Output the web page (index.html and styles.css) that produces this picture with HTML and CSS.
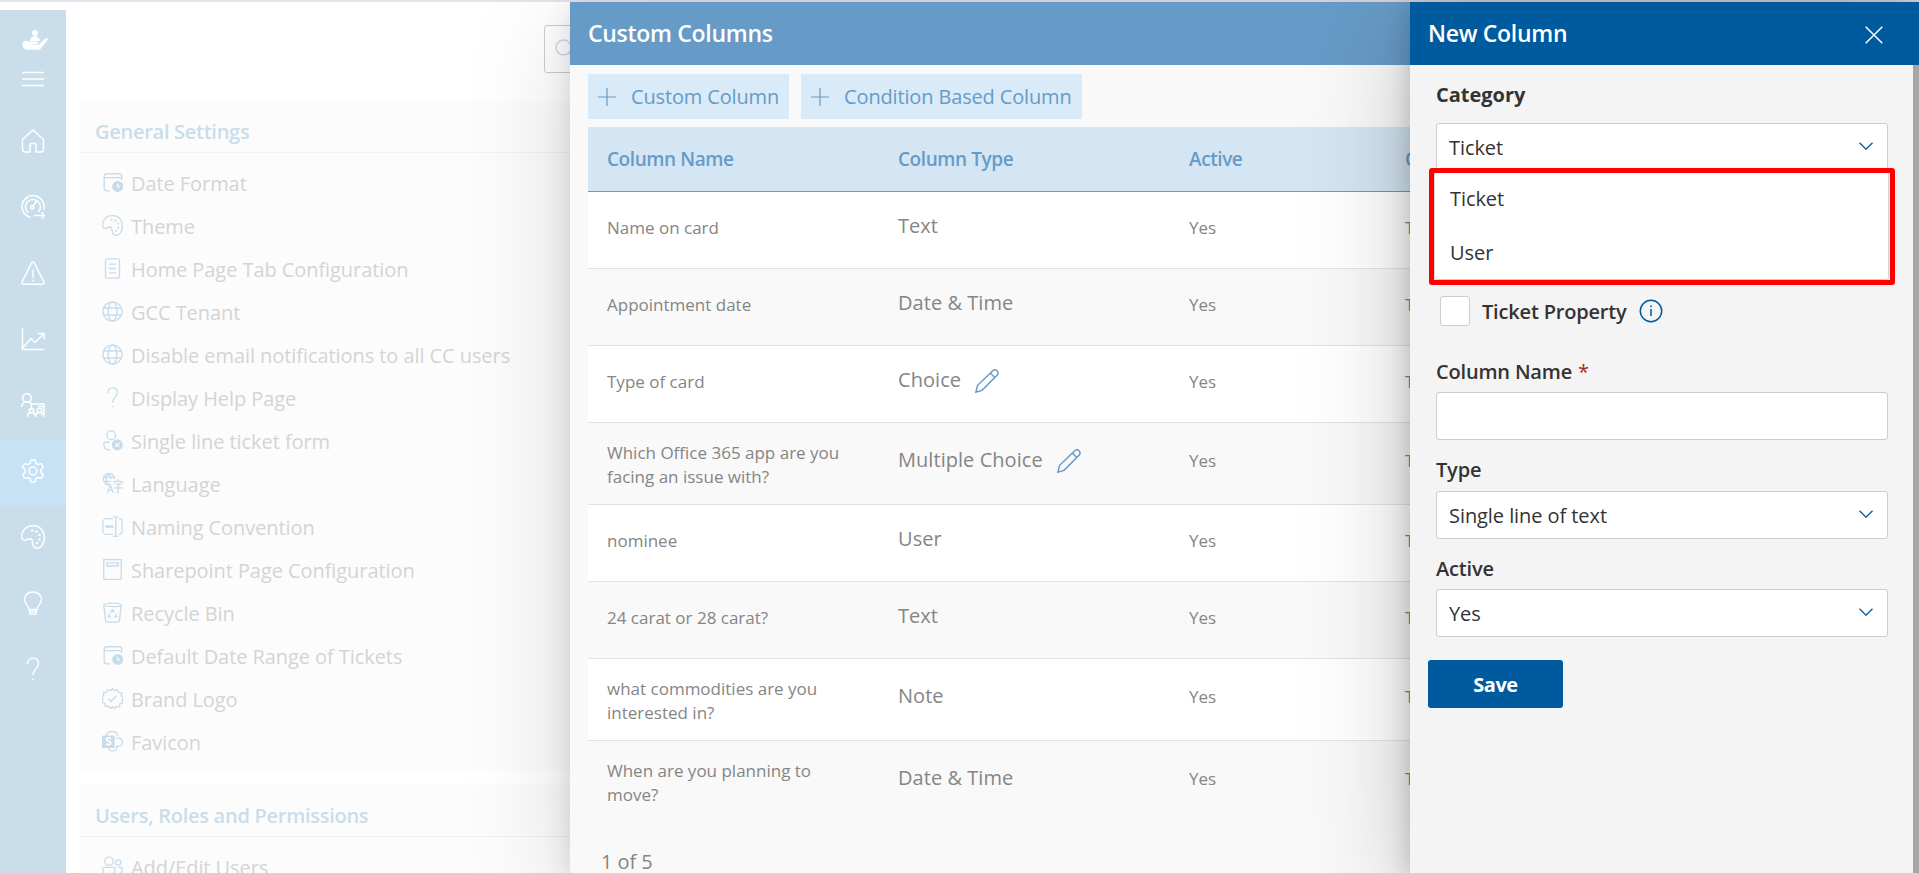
FILE: index.html
```html
<!DOCTYPE html>
<html lang="en">
<head>
<meta charset="utf-8">
<title>Settings - Custom Columns</title>
<link rel="stylesheet" href="styles.css">
</head>
<body>
<svg class="sprite" aria-hidden="true">
  <symbol id="i-calendar" viewBox="0 0 24 24"><path d="M9 21.500H5.500a3 3 0 0 1-3-3V5a3 3 0 0 1 3-3h14a3 3 0 0 1 3 3v4M2.500 6.500h20"/><circle cx="18" cy="16.500" r="6.300" fill="currentColor" stroke="none"/><path d="M18 13.500v3.500h2.500" stroke="#fcfcfc"/></symbol>
  <symbol id="i-palette" viewBox="0 0 24 24"><path d="M1.500 14.500C-.5 10 2 .8 12 .8c8 0 11.300 6 11.300 11.500 0 6-3 11-7.300 11-6.500 0-3-8.500-6-9.500-3-.8-5.500 3-8.500.7z"/><g fill="currentColor" stroke="none"><circle cx="11" cy="5.500" r="1.200"/><circle cx="15.500" cy="6.700" r="1.200"/><circle cx="18.500" cy="10" r="1.200"/><circle cx="18.500" cy="14.500" r="1.200"/><circle cx="16" cy="18" r="1.200"/></g></symbol>
  <symbol id="i-page" viewBox="0 0 24 24"><rect x="4" y="1" width="16" height="22" rx="2"/><path d="M8 7h8M8 12h8M8 17h8"/></symbol>
  <symbol id="i-globe" viewBox="0 0 24 24"><circle cx="12" cy="12" r="11"/><ellipse cx="12" cy="12" rx="5" ry="11"/><path d="M2 8h20M2 16h20"/></symbol>
  <symbol id="i-question" viewBox="0 0 24 24"><path d="M6.500 7c0-8 11-8 11-.5 0 5-5.500 5.500-5.500 11.500M12 21.300v1.700"/></symbol>
  <symbol id="i-userx" viewBox="0 0 24 24"><circle cx="10.500" cy="6" r="5"/><path d="M9 14H3.500C1 14 1 23 9.500 23"/><circle cx="17.500" cy="17" r="6.300" fill="currentColor" stroke="none"/><path d="M15.200 14.700l4.600 4.600M19.800 14.700l-4.600 4.600" stroke="#fcfcfc"/></symbol>
  <symbol id="i-language" viewBox="0 0 24 24"><path d="M9 13.500A6.500 6.500 0 1 1 14.500 7M1.500 5h12M1.500 9.500h9M7.500.7c-4 4-4 8.500 0 13M7.500.7c2 2 3 4 3 6.500M6 23l3.500-9.500L13 23M7.500 19.500h4M14 12V9.500h9V12M16 12.500h5l-2.500 2.500v7h-2M13.500 17h10M18.500 7v2.500"/></symbol>
  <symbol id="i-rename" viewBox="0 0 24 24"><path d="M12.500 3H5a4 4 0 0 0-4 4v10a4 4 0 0 0 4 4h7.500M19 3c3 0 4 2 4 4v10c0 2-1 4-4 4M12.500 1h6M12.500 23.300h6M15.700 1v22"/><path d="M4 12h9" stroke-width="2.800"/></symbol>
  <symbol id="i-template" viewBox="0 0 24 24"><path d="M2 .8h20v22.500H2zM5.500 4.500h13V8h-13z"/></symbol>
  <symbol id="i-recycle" viewBox="0 0 24 24"><path d="M2 3.500C2 .5 22 .5 22 3.500S2 5 2 3.500zM2 3.500l2 17c.2 1.700 1 2.500 3 2.500h10c2 0 2.800-.8 3-2.500l2-17"/><path d="M9.800 12L12 9l2.200 3M15.800 13.500l1 3.500h-3.500M10.500 17H7.200l1.300-3.500" stroke-width="1.700"/></symbol>
  <symbol id="i-badge" viewBox="0 0 24 24"><path d="M12 .8l2.300 2.400 3.200-1.200 1.400 3.100 3.400.2-.2 3.400 2.700 2-2 2.800 1.100 3.200-3.200 1.200-.7 3.300-3.300-.2-2 2.700L12 21.300l-2.700 2.200-2-2.700-3.300.2-.7-3.300-3.100-1.200 1.100-3.200-2-2.800 2.700-2L1.700 5.300l3.400-.2L6.500 2l3.200 1.200z"/><path d="M7.500 12.500l3 3 6-6.500"/></symbol>
  <symbol id="i-sharepoint" viewBox="0 0 24 24"><path d="M5 5C7-1 17-1 18 6M16 8.500c4-2 7.500 1 7.500 4.500S19 18.500 16 17M7.500 19c0 5.500 9 5.500 9.500-1"/><rect x="0" y="5" width="14.500" height="14.500" rx="1" fill="currentColor" stroke="none"/><path d="M10 8.500c-2-1-5-.8-5 1.200 0 2.300 5 1.500 5 4 0 2-3.500 2.300-5.500 1.200" stroke="#fff" stroke-width="2"/></symbol>
  <symbol id="i-people" viewBox="0 0 24 24"><circle cx="8" cy="6" r="4.800"/><circle cx="18.500" cy="7.500" r="3"/><path d="M1 14.500c0-1 1-1.500 2-1.500h10c1 0 2 .5 2 1.500C15 26 1 26 1 14.500zM18 13h3c1 0 2 .5 2 1.500 0 5-2 7-5.500 6.500"/></symbol>
  <symbol id="i-home" viewBox="0 0 24 24"><path d="M1.500 10.500L12 1l10.500 9.500v10c0 1.500-1 2.500-2.500 2.500h-5v-7c0-1-.5-1.500-1.500-1.500h-3c-1 0-1.500.5-1.500 1.500v7H4c-1.500 0-2.500-1-2.500-2.500z"/></symbol>
  <symbol id="i-gauge" viewBox="0 0 24 24"><path d="M9.500 22.300A11 11 0 1 1 22.500 15M7.500 18a7.500 7.500 0 1 1 10-1M11.500 12l4-6"/><circle cx="11.300" cy="12.300" r="1.600"/><path d="M13 20.500h10.500M20.500 17.300l3 3.200-3 3.200"/></symbol>
  <symbol id="i-alert" viewBox="0 0 24 24"><path d="M10.700 1.800c.6-1 2-1 2.600 0l9.600 19c.5 1.200-.2 2.400-1.500 2.400H2.600c-1.300 0-2-1.200-1.500-2.400z"/><path d="M12 8.500v8M12 18.500v2"/></symbol>
  <symbol id="i-chart" viewBox="0 0 24 24"><path d="M1.500.5v22h22M2 20.500l8-9 4 4L22.500 7M17 6.500h6v5.500"/></symbol>
  <symbol id="i-team" viewBox="0 0 24 24"><circle cx="6" cy="5" r="4.300"/><path d="M.8 14c0-6.500 9-6.500 9.500-2.500V17M10 11h13v11M17 13.500h5M6.500 24c0-6 8-6 8 0M14.500 24c0-6 8-6 8 0"/><circle cx="10.500" cy="17.500" r="2.200"/><circle cx="18.500" cy="17.500" r="2.200"/></symbol>
  <symbol id="i-gear" viewBox="0 0 24 24"><circle cx="12" cy="12" r="4"/><path d="M10 1h4l.8 3.300 2.200 1.200 3.300-.9 2 3.500-2.400 2.400v3l2.400 2.400-2 3.500-3.300-.9-2.200 1.200L14 23h-4l-.8-3.300L7 18.500l-3.300.9-2-3.500 2.400-2.400v-3L1.700 8.100l2-3.500 3.300.9 2.200-1.200z" stroke-linejoin="round"/></symbol>
  <symbol id="i-bulb" viewBox="0 0 24 24"><path d="M8 18.500c0-4-4.500-5-4.500-10C3.500 4 7 1 12 1s8.500 3 8.500 7.500c0 5-4.500 6-4.500 10zM8.300 18.500l.7 4.500h6l.7-4.500M9 20.500h6"/></symbol>
  <symbol id="i-pencil" viewBox="0 0 24 24"><path d="M.9 23.100l1.700-6.800L17.800 1.700c2.800-2.400 6.700 1.300 4.500 4.300L7 21.400zM15.300 4l4.700 4.700"/></symbol>
  <symbol id="i-chevron" viewBox="0 0 14 8"><path d="M.5.800L7 7.200 13.500.8"/></symbol>
</svg>

<div class="topline"></div>
<div class="page">
  <nav class="rail">
    <svg class="rail-logo" viewBox="0 0 26 20"><circle cx="13" cy="3" r="3"/><path d="M8 11c0-6.500 10-6.500 10 0zM1 12c2-1.500 4-1.500 6.500-.5h7c2 0 2 2.500 0 2.700H10v.6h6.500L23 9c1.500-1.500 3.500-.5 2.700.8L19 18.500c-.8 1-1.500 1.300-3 1.300H6L2.500 19C.5 17 0 15 1 12z"/></svg>
    <svg class="rail-menu" viewBox="0 0 22 16"><path d="M0 1.500h22M0 8h22M0 14.500h22"/></svg>
    <a class="rail-item"><svg class="icon"><use href="#i-home"/></svg></a>
    <a class="rail-item"><svg class="icon"><use href="#i-gauge"/></svg></a>
    <a class="rail-item"><svg class="icon"><use href="#i-alert"/></svg></a>
    <a class="rail-item"><svg class="icon"><use href="#i-chart"/></svg></a>
    <a class="rail-item"><svg class="icon"><use href="#i-team"/></svg></a>
    <a class="rail-item rail-item--active"><svg class="icon"><use href="#i-gear"/></svg></a>
    <a class="rail-item"><svg class="icon"><use href="#i-palette"/></svg></a>
    <a class="rail-item"><svg class="icon"><use href="#i-bulb"/></svg></a>
    <a class="rail-item"><svg class="icon"><use href="#i-question"/></svg></a>
  </nav>
  <main class="settings">
    <div class="search"><svg class="search-icon" viewBox="0 0 22 22"><circle cx="8.500" cy="8.500" r="7.500"/><path d="M14 14l7 7"/></svg></div>
    <section class="card">
      <h2 class="card-title">General Settings</h2>
      <ul class="card-list">
        <li><svg class="icon"><use href="#i-calendar"/></svg>Date Format</li>
        <li><svg class="icon"><use href="#i-palette"/></svg>Theme</li>
        <li><svg class="icon"><use href="#i-page"/></svg>Home Page Tab Configuration</li>
        <li><svg class="icon"><use href="#i-globe"/></svg>GCC Tenant</li>
        <li><svg class="icon"><use href="#i-globe"/></svg>Disable email notifications to all CC users</li>
        <li><svg class="icon"><use href="#i-question"/></svg>Display Help Page</li>
        <li><svg class="icon"><use href="#i-userx"/></svg>Single line ticket form</li>
        <li><svg class="icon"><use href="#i-language"/></svg>Language</li>
        <li><svg class="icon"><use href="#i-rename"/></svg>Naming Convention</li>
        <li><svg class="icon"><use href="#i-template"/></svg>Sharepoint Page Configuration</li>
        <li><svg class="icon"><use href="#i-recycle"/></svg>Recycle Bin</li>
        <li><svg class="icon"><use href="#i-calendar"/></svg>Default Date Range of Tickets</li>
        <li><svg class="icon"><use href="#i-badge"/></svg>Brand Logo</li>
        <li><svg class="icon"><use href="#i-sharepoint"/></svg>Favicon</li>
      </ul>
    </section>
    <section class="card">
      <h2 class="card-title">Users, Roles and Permissions</h2>
      <ul class="card-list">
        <li><svg class="icon"><use href="#i-people"/></svg>Add/Edit Users</li>
      </ul>
    </section>
  </main>
</div>

<section class="panel panel--columns">
  <header class="panel-header">Custom Columns</header>
  <div class="columns-body">
    <div class="toolbar">
      <button class="tool"><svg class="plus" viewBox="0 0 18 18"><path d="M9 0v18M0 9h18"/></svg>Custom Column</button>
      <button class="tool"><svg class="plus" viewBox="0 0 18 18"><path d="M9 0v18M0 9h18"/></svg>Condition Based Column</button>
    </div>
    <div class="table">
      <div class="thead"><span>Column Name</span><span>Column Type</span><span>Active</span><span>C</span></div>
      <div class="row"><span class="name">Name on card</span><span class="type">Text</span><span class="flag">Yes</span><span class="flag">T</span></div>
      <div class="row"><span class="name">Appointment date</span><span class="type">Date &amp; Time</span><span class="flag">Yes</span><span class="flag">T</span></div>
      <div class="row"><span class="name">Type of card</span><span class="type">Choice<svg class="icon"><use href="#i-pencil"/></svg></span><span class="flag">Yes</span><span class="flag">T</span></div>
      <div class="row row--tall"><span class="name">Which Office 365 app are you facing an issue with?</span><span class="type">Multiple Choice<svg class="icon"><use href="#i-pencil"/></svg></span><span class="flag">Yes</span><span class="flag">T</span></div>
      <div class="row"><span class="name">nominee</span><span class="type">User</span><span class="flag">Yes</span><span class="flag">T</span></div>
      <div class="row"><span class="name">24 carat or 28 carat?</span><span class="type">Text</span><span class="flag">Yes</span><span class="flag">T</span></div>
      <div class="row row--tall"><span class="name">what commodities are you interested in?</span><span class="type">Note</span><span class="flag">Yes</span><span class="flag">T</span></div>
      <div class="row row--tall row--last"><span class="name">When are you planning to move?</span><span class="type">Date &amp; Time</span><span class="flag">Yes</span><span class="flag">T</span></div>
    </div>
    <div class="pager">1 of 5</div>
  </div>
</section>

<section class="panel panel--new">
  <header class="panel-header panel-header--strong">New Column<svg class="close" viewBox="0 0 18 18"><path d="M.7.7l16.600 16.600M17.300.7L.7 17.300"/></svg></header>
  <div class="form-scroll">
    <form class="form">
      <label class="label label--bold">Category</label>
      <div class="dropdown">
        <div class="field">Ticket<svg class="chevron"><use href="#i-chevron"/></svg></div>
        <div class="menu"><div class="option">Ticket</div><div class="option">User</div></div>
        <div class="highlight"></div>
      </div>
      <div class="check"><i class="box"></i>Ticket Property<svg class="info" viewBox="0 0 24 24"><circle cx="12" cy="12" r="10.700"/><path d="M12 10v7M12 6.500v1.700"/></svg></div>
      <label class="label">Column Name<b class="required">*</b></label>
      <div class="field"></div>
      <label class="label label--type">Type</label>
      <div class="field">Single line of text<svg class="chevron"><use href="#i-chevron"/></svg></div>
      <label class="label label--active">Active</label>
      <div class="field">Yes<svg class="chevron"><use href="#i-chevron"/></svg></div>
      <button class="save" type="button">Save</button>
    </form>
    <div class="scrollbar"></div>
  </div>
</section>
</body>
</html>
```
FILE: styles.css
```css
* { box-sizing: border-box; }
body { margin: 0; width: 1919px; height: 873px; position: relative; overflow: hidden; background: #fff; font-family: "Open Sans", "Noto Sans", sans-serif; font-size: 20px; letter-spacing: -.07px; color: #333; }
button { font: inherit; border: 0; margin: 0; letter-spacing: inherit; }
.sprite { position: absolute; width: 0; height: 0; }
.icon { width: 24px; height: 24px; flex: none; fill: none; stroke: currentColor; stroke-width: 1.5; overflow: visible; }
.topline { height: 2px; background: #e8e2ec; }
.page { display: flex; height: 871px; }

.rail { width: 66px; margin-top: 8px; background: #c9ddea; color: #fff; display: flex; flex-direction: column; flex: none; }
.rail-logo { width: 26px; height: 20px; margin: 20px 0 0 22px; fill: #fff; flex: none; }
.rail-menu { width: 22px; height: 16px; margin: 21px 0 23px 22px; stroke: #fff; stroke-width: 1.700; flex: none; }
.rail-item { height: 66px; display: flex; align-items: center; justify-content: center; padding-bottom: 4px; flex: none; }
.rail-item--active { background: #c7e2f5; border-radius: 3px; }

.settings { flex: 1; padding: 23px 0 0 14px; overflow: hidden; }
.search { margin-left: 464px; width: 400px; height: 48px; border: 1px solid #ccc; border-radius: 3px; padding: 13px 0 0 10px; }
.search-icon { width: 22px; height: 22px; fill: none; stroke: #c7dceb; stroke-width: 1.500; }
.card { margin: 28px 0 0; background: #fcfcfc; padding-bottom: 6px; }
.card + .card { margin-top: 15px; }
.card-title { margin: 0; height: 52px; padding: 14px 0 0 15px; line-height: 34px; font-size: 20px; font-weight: 600; letter-spacing: -.27px; color: #c9ddea; border-bottom: 1px solid #f1f1f1; }
.card-list { list-style: none; margin: 0; padding: 9px 0 0 22px; }
.card-list li { height: 43px; display: flex; align-items: center; gap: 8px; color: #d4d4d4; }
.card-list .icon { width: 21px; height: 21px; color: #c7dceb; margin-bottom: 3px; }

.panel { position: absolute; top: 2px; bottom: 0; right: 0; display: flex; flex-direction: column; }
.panel--columns { left: 570px; background: #f9f9f9; box-shadow: 0 25px 100px rgba(0,0,0,.15), 0 5px 25px rgba(0,0,0,.12); }
.panel--new { left: 1410px; background: #f4f4f4; box-shadow: 0 25px 100px rgba(0,0,0,.22), 0 5px 25px rgba(0,0,0,.2); }
.panel-header { height: 63px; flex: none; padding: 0 36px 2px 18px; display: flex; align-items: center; justify-content: space-between; background: #669bc7; color: #fff; font-size: 23px; font-weight: 600; letter-spacing: -.3px; }
.panel-header--strong { background: #005a9e; }
.close { width: 18px; height: 18px; stroke: #fff; stroke-width: 1.500; margin-top: 4px; }

.columns-body { padding: 9px 0 0 18px; }
.toolbar { display: flex; gap: 12px; }
.tool { height: 45px; padding: 0 10px; display: flex; align-items: center; gap: 15px; background: #d9eaf8; color: #669bc7; letter-spacing: -.15px; }
.plus { width: 18px; height: 18px; stroke: currentColor; stroke-width: 1.200; }
.table { margin-top: 8px; }
.thead, .row { display: grid; grid-template-columns: 291px 291px 216px 1fr; padding-left: 19px; }
.thead { height: 65px; align-items: center; background: #d4e6f3; border-bottom: 1px solid #669bc7; color: #669bc7; font-size: 19px; font-weight: 600; letter-spacing: -.42px; }
.row { height: 77px; border-bottom: 1px solid #e3e3e3; background: #fff; color: #858585; line-height: 24px; align-items: start; }
.row:nth-child(odd) { background: #f9f9f9; }
.row--tall { height: 82px; }
.row--last { border-bottom: 0; }
.name, .flag { font-size: 17px; margin-top: 24px; letter-spacing: 0; }
.name { width: 250px; }
.type { margin-top: 22px; display: flex; gap: 14px; letter-spacing: .05px; }
.type .icon { color: #669bc7; margin-top: 1px; }
.row--tall .name { margin-top: 18px; }
.row--tall .type { margin-top: 25px; }
.row--tall .flag { margin-top: 26px; }
.pager { padding: 27px 0 0 13px; line-height: 24px; color: #858585; }

.form-scroll { flex: 1; display: flex; justify-content: space-between; }
.scrollbar { width: 6px; background: #a6a6a6; }
.form { width: 478px; padding: 17px 0 0 26px; }
.label { display: flex; gap: 6px; height: 33px; line-height: 26px; font-weight: 600; letter-spacing: -.18px; }
.label--bold { height: 41px; font-weight: 700; letter-spacing: 0; }
.label--type { height: 34px; margin-top: 17px; }
.label--active { margin-top: 17px; }
.required { color: #a4262c; font-weight: 400; }
.dropdown { position: relative; }
.field { height: 48px; border: 1px solid #ccc; border-radius: 3px; background: #fff; padding: 0 14px 0 12px; display: flex; align-items: center; justify-content: space-between; }
.chevron { width: 14px; height: 8px; fill: none; stroke: #005a9e; stroke-width: 1.300; margin-bottom: 2px; }
.menu { position: absolute; left: -1px; top: 47px; width: 453px; height: 109px; background: #fff; border-radius: 2px; padding: 2px 0 0 15px; box-shadow: 0 3px 7px rgba(0,0,0,.13), 0 0 2px rgba(0,0,0,.25); }
.option { height: 54px; line-height: 54px; }
.highlight { position: absolute; left: -7px; top: 45px; width: 466px; height: 117px; border: 5px solid #f00; border-radius: 3px; }
.check { display: flex; align-items: center; margin: 125px 0 33px 4px; height: 30px; font-weight: 600; letter-spacing: -.18px; }
.box { width: 30px; height: 30px; background: #fff; border: 1px solid #ccc; border-radius: 3px; margin-right: 12px; }
.info { width: 24px; height: 24px; margin-left: 12px; fill: none; stroke: #005a9e; stroke-width: 1.500; }
.save { width: 135px; height: 48px; margin: 23px 0 0 -8px; border-radius: 3px; background: #005a9e; color: #fff; font-weight: 700; letter-spacing: -.5px; padding: 0; display: block; }
```
